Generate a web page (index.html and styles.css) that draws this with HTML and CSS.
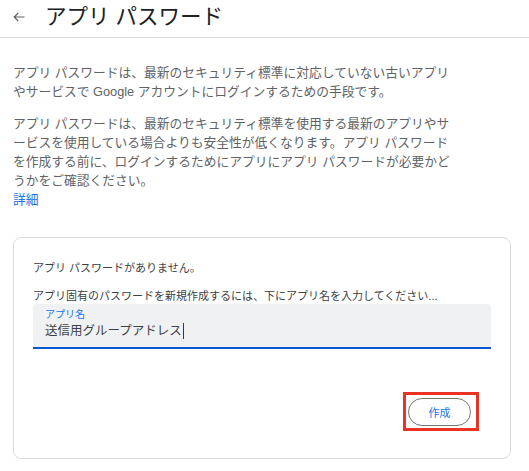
FILE: index.html
```html
<!DOCTYPE html>
<html lang="ja">
<head>
<meta charset="utf-8">
<title>アプリ パスワード</title>
<link rel="stylesheet" href="styles.css">
</head>
<body>
<header class="topbar">
  <svg class="back" width="12" height="10" viewBox="0 0 12 10" aria-hidden="true">
    <path d="M11.5 5H1.2M5.2 1L1.2 5l4 4" fill="none" stroke="#5f6368" stroke-width="1.2"/>
  </svg>
  <h1 class="title">アプリ パスワード</h1>
</header>
<main class="content">
  <p class="desc">アプリ パスワードは、最新のセキュリティ標準に対応していない古いアプリやサービスで Google アカウントにログインするための手段です。</p>
  <p class="desc second">アプリ パスワードは、最新のセキュリティ標準を使用する最新のアプリやサービスを使用している場合よりも安全性が低くなります。アプリ パスワードを作成する前に、ログインするためにアプリにアプリ パスワードが必要かどうかをご確認ください。</p>
  <a class="more" href="#">詳細</a>

  <section class="card">
    <p class="note">アプリ パスワードがありません。</p>
    <p class="note hint">アプリ固有のパスワードを新規作成するには、下にアプリ名を入力してください...</p>
    <div class="field">
      <span class="label">アプリ名</span>
      <span class="value">送信用グループアドレス<span class="caret"></span></span>
    </div>
    <div class="actions">
      <span class="highlight"><button class="create" type="button">作成</button></span>
    </div>
  </section>
</main>
</body>
</html>
```
FILE: styles.css
```css
* { box-sizing: border-box; }
html, body { margin: 0; padding: 0; background: #fff; }
body {
  font-family: "Liberation Sans", "Noto Sans CJK JP", sans-serif;
  color: #5f6368;
}
.topbar {
  height: 38px;
  display: flex;
  align-items: center;
  padding: 0 0 3px 13px;
  border-bottom: 1px solid #dadce0;
}
.back { display: block; flex: none; }
.title {
  margin: 0 0 0 20px;
  font-size: 21.5px;
  font-weight: 400;
  color: #202124;
  line-height: 28px;
}
.content {
  padding: 0 18px 0 13px;
}
.desc {
  margin: 26px 0 0;
  max-width: 443px;
  font-size: 12.75px;
  line-height: 18.7px;
  color: #5f6368;
}
.desc.second { margin-top: 14px; }
.more {
  display: block;
  margin-top: 1px;
  font-size: 12.75px;
  line-height: 18.7px;
  color: #1a73e8;
  text-decoration: none;
}
.card {
  margin-top: 27px;
  border: 1px solid #dadce0;
  border-radius: 8px;
  padding: 22px 19px 27px 19px;
}
.note {
  margin: 0;
  font-size: 11px;
  line-height: 16px;
  color: #3c4043;
}
.note.hint { margin-top: 12px; }
.field {
  display: flex;
  flex-direction: column;
  background: #f0f1f3;
  border-radius: 4px 4px 0 0;
  border-bottom: 2px solid #0b57d0;
  padding: 5px 12px 7px;
}
.label {
  font-size: 10px;
  line-height: 12px;
  margin-bottom: 1px;
  color: #1a73e8;
}
.value {
  font-size: 12.5px;
  line-height: 18px;
  color: #3c4043;
  display: flex;
  align-items: center;
}
.caret {
  display: inline-block;
  width: 1px;
  height: 16px;
  background: #0b3d91;
  margin-left: 1px;
}
.actions {
  display: flex;
  justify-content: flex-end;
  margin-top: 43px;
  padding-right: 12px;
}
.highlight {
  display: inline-flex;
  border: 3px solid #ea3323;
  padding: 3px 5px 2px 2px;
}
.create {
  width: 63px;
  height: 28px;
  border: 1px solid #747775;
  border-radius: 14px;
  background: #fff;
  color: #1a73e8;
  font-family: "Liberation Sans", "Noto Sans CJK JP", sans-serif;
  font-size: 11px;
  padding: 0;
}
```
